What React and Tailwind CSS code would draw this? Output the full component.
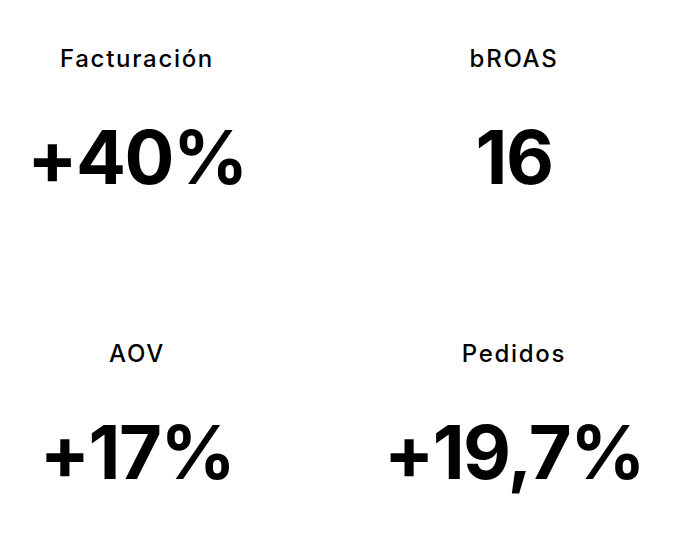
const stats = [
  { label: "Facturación", value: "+40%" },
  { label: "bROAS", value: "16" },
  { label: "AOV", value: "+17%" },
  { label: "Pedidos", value: "+19,7%" },
];

function Stat({ label, value }) {
  return (
    <div className="flex flex-col items-center">
      <div className="text-[24px] leading-none font-medium tracking-[1.7px] text-black">{label}</div>
      <div className="mt-[49px] text-[74px] leading-none font-bold tracking-[-1.5px] text-black">{value}</div>
    </div>
  );
}

export default function App() {
  return (
    <div className="w-[675px] h-[540px] bg-white pt-[47px] font-['Inter',sans-serif] overflow-hidden">
      <div className="grid grid-cols-[274px_322px] gap-x-[79px] gap-y-[148px]">
        {stats.map((s) => (
          <Stat key={s.label} label={s.label} value={s.value} />
        ))}
      </div>
    </div>
  );
}
